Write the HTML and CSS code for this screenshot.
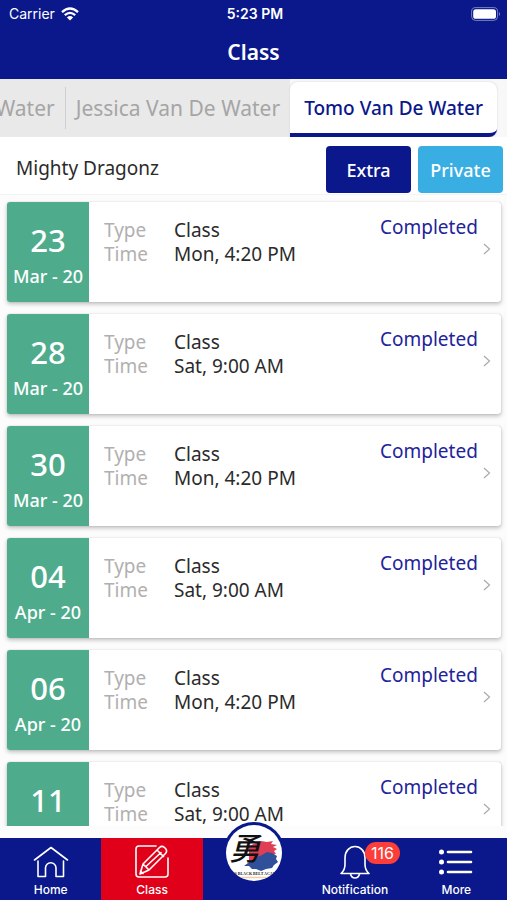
FILE: index.html
```html
<!DOCTYPE html>
<html lang="en">
<head>
<meta charset="utf-8">
<meta name="viewport" content="width=device-width, initial-scale=1">
<title>Class</title>
<link rel="stylesheet" href="styles.css">
</head>
<body>
<header class="top">
  <div class="status">
    <span class="carrier">Carrier
      <svg class="wifi" viewBox="0 0 18 14" aria-hidden="true"><g fill="none" stroke="#fff" stroke-width="2.3"><path d="M1 5.2Q9-2.2 17 5.2"/><path d="M3.8 8.2Q9 3.6 14.2 8.2"/></g><path d="M9 13.6L5.9 10.4Q9 7.8 12.1 10.4Z" fill="#fff"/></svg>
    </span>
    <span class="clock">5:23 PM</span>
    <svg class="battery" viewBox="0 0 30 14" aria-hidden="true"><rect x=".6" y=".6" width="26" height="12.8" rx="4" fill="none" stroke="#fff" stroke-opacity=".45"/><rect x="2.2" y="2.2" width="22.8" height="9.6" rx="2.6" fill="#fff"/><path d="M28 5Q30 7 28 9Z" fill="#fff" fill-opacity=".5"/></svg>
  </div>
  <h1>Class</h1>
</header>

<nav class="people" aria-label="Students">
  <div class="others">
    <a class="person cut" href="#water">Water</a>
    <a class="person" href="#jessica">Jessica Van De Water</a>
  </div>
  <a class="person current" href="#tomo" aria-current="true">Tomo Van De Water</a>
</nav>

<section class="program">
  <h2>Mighty Dragonz</h2>
  <button class="extra" type="button">Extra</button>
  <button class="private" type="button">Private</button>
</section>

<main class="list">
  <article class="card">
    <div class="date"><b>23</b><span>Mar - 20</span></div>
    <dl><dt>Type</dt><dd>Class</dd><dt>Time</dt><dd>Mon, 4:20 PM</dd></dl>
    <div class="state"><a href="#c1">Completed</a><svg viewBox="0 0 8 12" aria-hidden="true"><path d="M1 1l5.500 5L1 11"/></svg></div>
  </article>
  <article class="card">
    <div class="date"><b>28</b><span>Mar - 20</span></div>
    <dl><dt>Type</dt><dd>Class</dd><dt>Time</dt><dd>Sat, 9:00 AM</dd></dl>
    <div class="state"><a href="#c2">Completed</a><svg viewBox="0 0 8 12" aria-hidden="true"><path d="M1 1l5.500 5L1 11"/></svg></div>
  </article>
  <article class="card">
    <div class="date"><b>30</b><span>Mar - 20</span></div>
    <dl><dt>Type</dt><dd>Class</dd><dt>Time</dt><dd>Mon, 4:20 PM</dd></dl>
    <div class="state"><a href="#c3">Completed</a><svg viewBox="0 0 8 12" aria-hidden="true"><path d="M1 1l5.500 5L1 11"/></svg></div>
  </article>
  <article class="card">
    <div class="date"><b>04</b><span>Apr - 20</span></div>
    <dl><dt>Type</dt><dd>Class</dd><dt>Time</dt><dd>Sat, 9:00 AM</dd></dl>
    <div class="state"><a href="#c4">Completed</a><svg viewBox="0 0 8 12" aria-hidden="true"><path d="M1 1l5.500 5L1 11"/></svg></div>
  </article>
  <article class="card">
    <div class="date"><b>06</b><span>Apr - 20</span></div>
    <dl><dt>Type</dt><dd>Class</dd><dt>Time</dt><dd>Mon, 4:20 PM</dd></dl>
    <div class="state"><a href="#c5">Completed</a><svg viewBox="0 0 8 12" aria-hidden="true"><path d="M1 1l5.500 5L1 11"/></svg></div>
  </article>
  <article class="card">
    <div class="date"><b>11</b></div>
    <dl><dt>Type</dt><dd>Class</dd><dt>Time</dt><dd>Sat, 9:00 AM</dd></dl>
    <div class="state"><a href="#c6">Completed</a><svg viewBox="0 0 8 12" aria-hidden="true"><path d="M1 1l5.500 5L1 11"/></svg></div>
  </article>
</main>

<nav class="tabs" aria-label="Main">
  <a class="tab" href="#home">
    <svg viewBox="0 0 36 36" aria-hidden="true"><path d="M1.500 15L18 2.500 34.500 15M5 16v15.500h7.500V23a5 5 0 0 1 10.500 0v8.500h7.500V16"/></svg>
    <span>Home</span>
  </a>
  <a class="tab active" href="#class">
    <svg viewBox="0 0 36 36" aria-hidden="true"><path d="M22 1H5Q2 1 2 4v25q0 3 3 3h26q3 0 3-3V13M6 29l3-10L25.500 2.500q2.500-2.200 5 0l1 1q2.200 2.500 0 5L15 25zM9 19l6 6M23 5l6.500 6.500M12 21.500L27 7.500M6.500 26l2.500 2.500"/></svg>
    <span>Class</span>
  </a>
  <a class="tab logo" href="#academy" aria-label="Academy">
    <svg class="badge" viewBox="0 0 62 62">
      <defs><clipPath id="disc"><circle cx="31" cy="31" r="28"/></clipPath></defs>
      <circle cx="31" cy="31" r="31" fill="#0a188b"/>
      <circle cx="31" cy="31" r="28" fill="#fff"/>
      <g clip-path="url(#disc)">
        <path d="M26 24l7-3 5-2 6 1 6-1-2 3 6 1-4 2 4 2-3 2 2 3-6 1-4 2-5 2-7 3-5-1z" fill="#df3f54"/>
        <path d="M25 41l7-5 7-3 5-3 5 1 5 3-1 3 2 3-4 3-2 3-6 1-5 2-5-2-4 0-3-3-5 0z" fill="#30509a"/>
        <text class="kanji" x="6" y="38">勇</text>
        <text class="motto" x="31" y="53" text-anchor="middle">INTO’S BLACK BELT ACADEMY</text>
        <path d="M15 55.500h33" stroke="#f2cfa6" stroke-width="1.500" stroke-dasharray="3 1"/>
      </g>
    </svg>
  </a>
  <a class="tab" href="#notification">
    <svg viewBox="0 0 36 36" aria-hidden="true"><path d="M4 28.500q4-3.500 4-9V13C8 6 12.500 1.500 18 1.500S28 6 28 13v6.500q0 5.500 4 9zM13.500 29q1 4 4.500 4t4.500-4"/></svg>
    <span>Notification</span>
    <em>116</em>
  </a>
  <a class="tab" href="#more">
    <svg viewBox="0 0 36 36" aria-hidden="true"><path class="bars" d="M10 7h23M10 17h23M10 27h23"/><g fill="#fff" stroke="none"><circle cx="3.500" cy="7" r="2.500"/><circle cx="3.500" cy="17" r="2.500"/><circle cx="3.500" cy="27" r="2.500"/></g></svg>
    <span>More</span>
  </a>
</nav>
</body>
</html>
```
FILE: styles.css
```css
* { box-sizing: border-box; }

body {
  margin: 0;
  height: 100vh;
  display: flex;
  flex-direction: column;
  overflow: hidden;
  background: #fcfcfc;
  color: #2b2b2b;
  font-family: "Noto Sans", "Open Sans", sans-serif;
  font-size: 19px;
}

a { color: inherit; text-decoration: none; }
h1, h2, dl, dd { margin: 0; }

.top { background: #0a188b; color: #fff; height: 79px; flex: none; }

.status {
  display: grid;
  grid-template-columns: 1fr auto 1fr;
  align-items: center;
  height: 27px;
  padding: 0 6px 0 9px;
  font: 14px Inter, sans-serif;
}
.carrier { display: flex; align-items: center; gap: 6px; }
.wifi { width: 18px; height: 14px; }
.clock { font-weight: 600; }
.battery { width: 30px; height: 14px; justify-self: end; }
.top h1 { font-size: 21px; font-weight: 600; line-height: 50px; text-align: center; }

.people { display: flex; height: 58px; flex: none; padding-right: 10px; background: #f8f8f8; }
.others {
  flex: 1;
  min-width: 0;
  display: flex;
  justify-content: flex-end;
  align-items: center;
  background: #e9e9e9;
  color: #a5a5a5;
  overflow: hidden;
}
.person { padding: 0 10px; line-height: 42px; white-space: nowrap; }
.others .person { font-size: 21px; }
.cut { border-right: 1px solid #cfcfcf; }
.current {
  margin-top: 3px;
  padding: 0 14px;
  border-bottom: 4px solid #0a188b;
  border-radius: 8px;
  border-bottom-left-radius: 0;
  background: #fff;
  box-shadow: 0 0 2px #ccc;
  color: #0a188b;
  font-weight: 500;
  line-height: 53px;
}

.program {
  display: flex;
  align-items: center;
  gap: 7px;
  height: 58px;
  flex: none;
  padding: 9px 4px 1px 16px;
  background: #fff;
  border-bottom: 1px solid #f3f3f3;
}
.program h2 { flex: 1; font-size: 19px; font-weight: 400; line-height: 44px; align-self: flex-start; }
.program button {
  width: 85px;
  height: 47px;
  padding: 0;
  border: 0;
  border-radius: 4px;
  color: #fff;
  font: 500 18px "Noto Sans", sans-serif;
}
.program .extra { background: #0a188b; }
.program .private { background: #38aee2; }

.list {
  flex: 1;
  min-height: 0;
  display: flex;
  flex-direction: column;
  gap: 12px;
  padding: 7px 6px 0 7px;
  margin-bottom: 12px;
  overflow: hidden;
}
.card {
  display: flex;
  flex: none;
  height: 100px;
  border-radius: 3px;
  background: #fff;
  box-shadow: 0 2px 4px rgba(0, 0, 0, .25), 0 0 1px rgba(0, 0, 0, .25);
}
.date {
  width: 82px;
  padding-top: 16px;
  border-radius: 3px 0 0 3px;
  background: #4eac8c;
  color: #fff;
  text-align: center;
}
.date b { display: block; font-size: 31px; font-weight: 500; line-height: 44px; }
.date span { display: block; font-size: 18px; font-weight: 500; line-height: 28px; }
.card dl {
  flex: 1;
  display: grid;
  grid-template-columns: 70px 1fr;
  grid-auto-rows: 24px;
  padding: 16px 0 0 15px;
  line-height: 24px;
}
.card dt { color: #b0b0b0; }
.state { width: 121px; padding: 12px 10px 0 0; color: #22229b; line-height: 26px; }
.state a { display: block; }
.state svg {
  display: block;
  width: 8px;
  height: 12px;
  margin: 3px 0 0 auto;
  fill: none;
  stroke: #aaa;
  stroke-width: 1.2;
}

.tabs { display: flex; flex: none; height: 62px; background: #0a188b; color: #fff; }
.tab {
  position: relative;
  flex: 1;
  display: flex;
  flex-direction: column;
  align-items: center;
  padding-top: 7px;
  font: 500 12px Inter, sans-serif;
}
.tab svg { flex: none; width: 36px; height: 36px; fill: none; stroke: #fff; stroke-width: 1.6; stroke-linejoin: round; stroke-linecap: round; }
.tab span { line-height: 18px; }
.tab .bars { stroke-width: 2.6; }
.active { background: #e00019; }
.tab .badge { position: absolute; top: -16px; width: 62px; height: 62px; stroke: none; }
.kanji { fill: #111; font: italic 500 31px "Noto Sans CJK JP", sans-serif; }
.motto { fill: #222; font: 700 4px "Liberation Serif", serif; }
.tab em {
  position: absolute;
  top: 4px;
  left: 60%;
  padding: 0 6px;
  border-radius: 11px;
  background: #fc3d39;
  font: 16px/22px Inter, sans-serif;
}
```
